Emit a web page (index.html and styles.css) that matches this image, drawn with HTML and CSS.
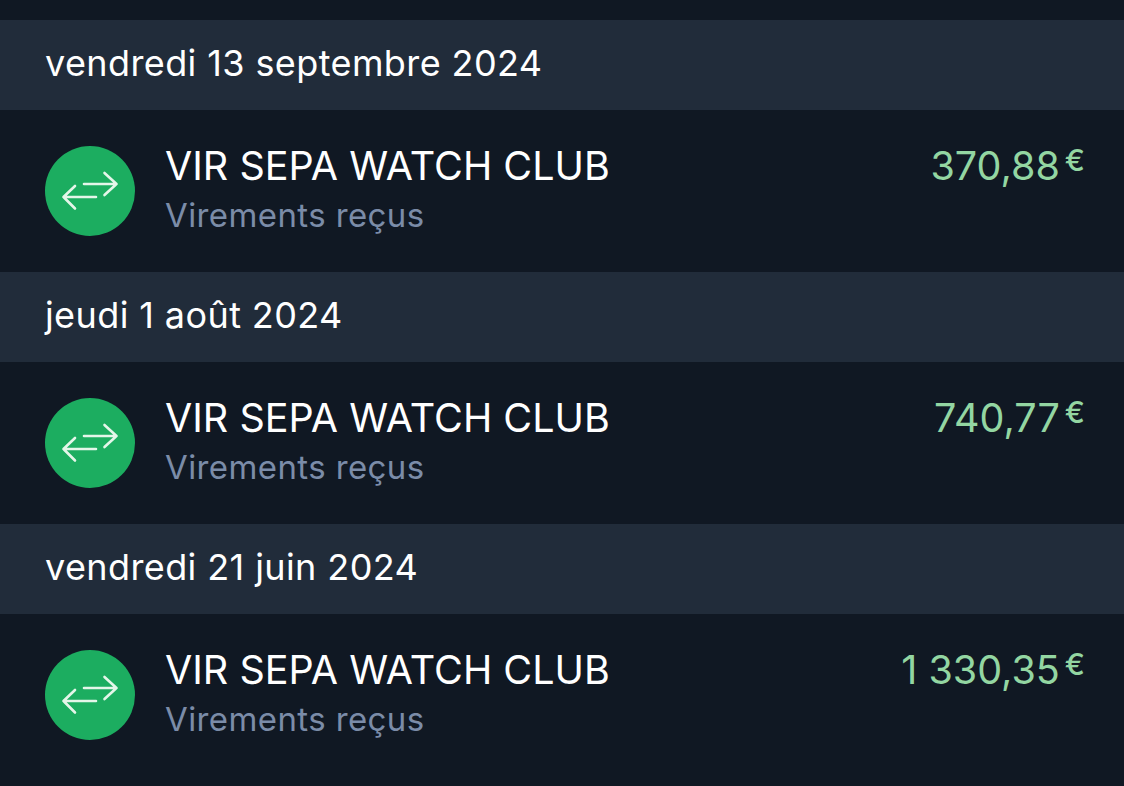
FILE: index.html
```html
<!DOCTYPE html>
<html lang="fr">
	<head>
		<meta charset="utf-8">
		<title>Virements</title>
		<link rel="stylesheet" href="styles.css">
	</head>
	<body>
		<div class="list">
			<div class="day">vendredi 13 septembre 2024</div>
			<div class="row">
				<div class="icon">
					<svg viewBox="0 0 90 90" width="90" height="90"><path d="M39 38H71.5M59.500 27L71.500 38L59.500 49M51 51H18.500M30 40L18.500 51L30 62.500"/></svg>
				</div>
				<div class="info">
					<div class="name">VIR SEPA WATCH CLUB</div>
					<div class="cat">Virements reçus</div>
				</div>
				<div class="amount">370,88<span class="cur">€</span></div>
			</div>
			<div class="day">jeudi 1 août 2024</div>
			<div class="row">
				<div class="icon">
					<svg viewBox="0 0 90 90" width="90" height="90"><path d="M39 38H71.5M59.500 27L71.500 38L59.500 49M51 51H18.500M30 40L18.500 51L30 62.500"/></svg>
				</div>
				<div class="info">
					<div class="name">VIR SEPA WATCH CLUB</div>
					<div class="cat">Virements reçus</div>
				</div>
				<div class="amount">740,77<span class="cur">€</span></div>
			</div>
			<div class="day">vendredi 21 juin 2024</div>
			<div class="row">
				<div class="icon">
					<svg viewBox="0 0 90 90" width="90" height="90"><path d="M39 38H71.5M59.500 27L71.500 38L59.500 49M51 51H18.500M30 40L18.500 51L30 62.500"/></svg>
				</div>
				<div class="info">
					<div class="name">VIR SEPA WATCH CLUB</div>
					<div class="cat">Virements reçus</div>
				</div>
				<div class="amount">1 330,35<span class="cur">€</span></div>
			</div>
		</div>
	</body>
</html>
```

FILE: styles.css
```css
html, body{
	margin: 0;
	height: 100%;
	overflow: hidden;
	background: #101823;
}
body{
	font-family: Inter, Lato, sans-serif;
}
.list{
	padding-top: 20px;
}
.day{
	height: 90px;
	line-height: 86px;
	padding-left: 45px;
	background: #212c3a;
	color: #fff;
	font-size: 36px;
	font-weight: 400;
	letter-spacing: 0.4px;
}
.row{
	display: flex;
	height: 162px;
	padding: 36px 39px 0 45px;
	box-sizing: border-box;
}
.icon{
	width: 90px;
	height: 90px;
	border-radius: 50%;
	background: #1cad60;
}
.icon svg{
	display: block;
	fill: none;
	stroke: #e4f6e9;
	stroke-width: 2.6;
	stroke-linecap: round;
	stroke-linejoin: round;
}
.info{
	flex: 1;
	margin-left: 30px;
}
.name{
	color: #fff;
	font-size: 39.5px;
	font-weight: 400;
	line-height: 40px;
}
.cat{
	color: #7b8ca8;
	font-size: 33px;
	font-weight: 400;
	line-height: 40px;
	margin-top: 9px;
	letter-spacing: 0.4px;
}
.amount{
	display: flex;
	color: #93d6a2;
	font-size: 39.5px;
	font-weight: 400;
	line-height: 40px;
}
.cur{
	font-size: 30px;
	font-weight: 500;
	line-height: 28px;
	margin-left: 5px;
}
```
